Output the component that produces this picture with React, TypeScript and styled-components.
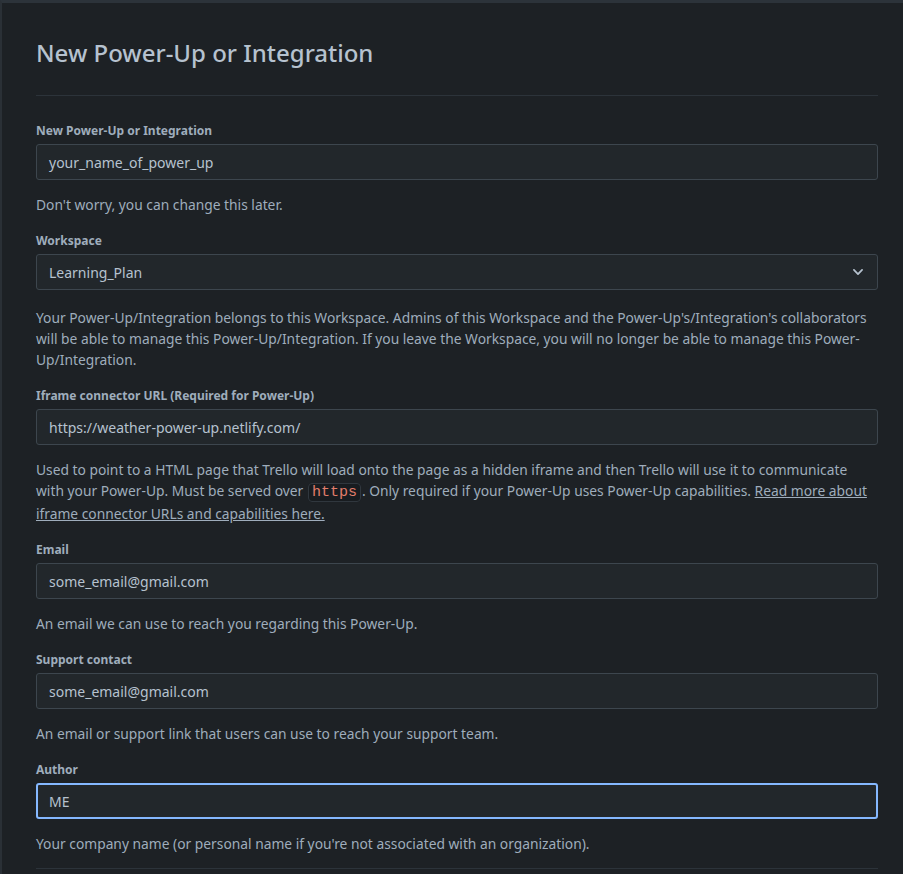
import React from 'react'
import styled, { createGlobalStyle } from 'styled-components'

const GlobalStyle = createGlobalStyle`
  html, body {
    margin: 0;
    padding: 0;
    background: #1d2125;
  }
  body {
    font-family: "Segoe UI", "Noto Sans", sans-serif;
  }
`

const Frame = styled.div`
  min-height: 874px;
  box-sizing: border-box;
  background: #1d2125;
  border-top: 3px solid #2c333a;
  border-left: 2px solid #2a3036;
  padding: 34px 25px 0 34px;
  color: #9fadbc;
  font-size: 13.8px;
  line-height: 21px;
`

const Title = styled.h1`
  margin: 0;
  font-size: 24px;
  line-height: 32px;
  font-weight: 500;
  color: #b6c2cf;
  padding-bottom: 26px;
  border-bottom: 1px solid #2c333a;
`

const Form = styled.div`
  display: flex;
  flex-direction: column;
  padding-top: 27px;
`

const Field = styled.div`
  display: flex;
  flex-direction: column;
  margin-bottom: 18px;
`

const Label = styled.label`
  font-size: 12px;
  line-height: 16px;
  font-weight: 700;
  color: #9fadbc;
  margin-bottom: 5px;
`

const InputBox = styled.div<{ $focused?: boolean; $select?: boolean }>`
  height: 36px;
  box-sizing: border-box;
  display: flex;
  align-items: center;
  justify-content: space-between;
  padding: 0 ${(p) => (p.$focused ? '11px' : '12px')};
  margin-bottom: ${(p) => (p.$select ? '3px' : '0')};
  background: #22272b;
  border: ${(p) => (p.$focused ? '2px solid #85b8ff' : '1px solid #3d464e')};
  border-radius: 3px;
  color: #b6c2cf;
  font-size: 14px;
`

const Help = styled.p`
  margin: 14px 0 0;
  color: #9fadbc;
  font-size: 13.8px;
  line-height: 21px;
`

const Code = styled.code`
  font-family: "Liberation Mono", monospace;
  font-size: 15px;
  color: #e27d6b;
  background: #181c20;
  border: 1px solid #30373e;
  border-radius: 4px;
  padding: 0 3px;
  margin: 0 1px;
`

const Link = styled.a`
  color: #9fadbc;
  text-decoration: underline;
`

const Divider = styled.div`
  height: 1px;
  background: #2c333a;
  margin-top: -4px;
`

const Chevron = () => (
  <svg width="14" height="14" viewBox="0 0 24 24" fill="none">
    <path d="M5 8.5l7 7 7-7" stroke="#b6c2cf" strokeWidth="3" strokeLinecap="round" strokeLinejoin="round" />
  </svg>
)

export default function App() {
  return (
    <Frame>
      <GlobalStyle />
      <Title>New Power-Up or Integration</Title>
      <Form>
        <Field>
          <Label>New Power-Up or Integration</Label>
          <InputBox>your_name_of_power_up</InputBox>
          <Help>Don't worry, you can change this later.</Help>
        </Field>
        <Field>
          <Label>Workspace</Label>
          <InputBox $select>
            Learning_Plan
            <Chevron />
          </InputBox>
          <Help>
            Your Power-Up/Integration belongs to this Workspace. Admins of this Workspace and the Power-Up's/Integration's
            collaborators will be able to manage this Power-Up/Integration. If you leave the Workspace, you will no longer
            be able to manage this Power-Up/Integration.
          </Help>
        </Field>
        <Field>
          <Label>Iframe connector URL (Required for Power-Up)</Label>
          <InputBox>https://weather-power-up.netlify.com/</InputBox>
          <Help>
            Used to point to a HTML page that Trello will load onto the page as a hidden iframe and then Trello will use it
            to communicate with your Power-Up. Must be served over <Code>https</Code>. Only required if your Power-Up uses
            Power-Up capabilities. <Link>Read more about iframe connector URLs and capabilities here.</Link>
          </Help>
        </Field>
        <Field>
          <Label>Email</Label>
          <InputBox>some_email@gmail.com</InputBox>
          <Help>An email we can use to reach you regarding this Power-Up.</Help>
        </Field>
        <Field>
          <Label>Support contact</Label>
          <InputBox>some_email@gmail.com</InputBox>
          <Help>An email or support link that users can use to reach your support team.</Help>
        </Field>
        <Field>
          <Label>Author</Label>
          <InputBox $focused>ME</InputBox>
          <Help>Your company name (or personal name if you're not associated with an organization).</Help>
        </Field>
        <Divider />
      </Form>
    </Frame>
  )
}
